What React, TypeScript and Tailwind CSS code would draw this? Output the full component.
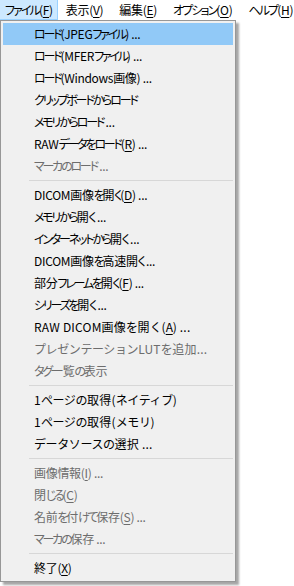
import React from "react";

const KANA = /([\u3040-\u30ff\u30fc]+)/;

type Mode = "n" | "w" | "b";

const kanaCls: Record<Mode, string> = {
  n: "tracking-[-2.2px]",
  w: "tracking-[-0.4px]",
  b: "tracking-[-1.9px]",
};
const latCls: Record<Mode, string> = {
  n: "tracking-[-0.3px]",
  w: "tracking-[0.2px]",
  b: "tracking-[-0.3px]",
};

function T({ s, mode = "n" }: { s: string; mode?: Mode }) {
  const parts = s.split(KANA).filter((p) => p.length > 0);
  return (
    <>
      {parts.map((p, i) => (
        <span key={i} className={KANA.test(p) ? kanaCls[mode] : latCls[mode]}>
          {p}
        </span>
      ))}
    </>
  );
}

const U = ({ c }: { c: string }) => (
  <span className="underline underline-offset-2 tracking-[-0.3px]">{c}</span>
);

type Item =
  | { sep: true }
  | {
      sep?: false;
      a: string;
      k?: string;
      b?: string;
      disabled?: boolean;
      active?: boolean;
      wide?: boolean;
    };

const items: Item[] = [
  { a: "ロード(JPEGファイル) ...", active: true },
  { a: "ロード(MFERファイル) ..." },
  { a: "ロード(Windows画像) ..." },
  { a: "クリップボードからロード" },
  { a: "メモリからロード ..." },
  { a: "RAWデータをロード(", k: "R", b: ") ..." },
  { a: "マーカのロード ...", disabled: true },
  { sep: true },
  { a: "DICOM画像を開く(", k: "D", b: ") ..." },
  { a: "メモリから開く ..." },
  { a: "インターネットから開く ..." },
  { a: "DICOM画像を高速開く ..." },
  { a: "部分フレームを開く(", k: "F", b: ") ..." },
  { a: "シリーズを開く ..." },
  { a: "RAW DICOM画像を開く(", k: "A", b: ") ...", wide: true },
  { a: "プレゼンテーションLUTを追加...", disabled: true, wide: true },
  { a: "タグ一覧の表示", disabled: true },
  { sep: true },
  { a: "1ページの取得(ネイティブ)", wide: true },
  { a: "1ページの取得(メモリ)", wide: true },
  { a: "データソースの選択 ...", wide: true },
  { sep: true },
  { a: "画像情報(", k: "I", b: ") ...", disabled: true },
  { a: "閉じる(", k: "C", b: ")", disabled: true },
  { a: "名前を付けて保存(", k: "S", b: ") ...", disabled: true },
  { a: "マーカの保存 ...", disabled: true },
  { sep: true },
  { a: "終了(", k: "X", b: ")" },
];

const bar: { t: string; k: string }[] = [
  { t: "ファイル", k: "F" },
  { t: "表示", k: "V" },
  { t: "編集", k: "E" },
  { t: "オプション", k: "O" },
  { t: "ヘルプ", k: "H" },
];

export default function App() {
  return (
    <div
      className="w-[294px] h-[586px] bg-white text-[12px] text-black overflow-hidden"
      style={{ fontFamily: '"Noto Sans CJK JP", sans-serif' }}
    >
      <div className="flex h-[20px] items-stretch whitespace-nowrap [font-feature-settings:'palt']">
        {bar.map((b, i) => (
          <div
            key={b.t}
            className={
              i === 0
                ? "flex items-center pl-[5px] pr-[4px] bg-[#cce8ff] border-r border-b border-[#99d1ff]"
                : "flex items-center px-[8px]"
            }
          >
            <span>
              <T s={b.t + "("} mode="b" />
              <U c={b.k} />
              <T s=")" mode="b" />
            </span>
          </div>
        ))}
      </div>
      <div className="w-[236px] bg-[#f0f0f0] border border-[#979797] pt-[2px] pb-[2px] shadow-[3px_3px_2px_rgba(0,0,0,0.35)]">
        {items.map((it, i) =>
          it.sep ? (
            <div key={i} className="h-[7px] flex items-center pl-[28px] pr-[2px]">
              <div className="h-px w-full bg-[#d7d7d7]" />
            </div>
          ) : (
            <div
              key={i}
              className={
                "h-[22px] mx-[2px] flex items-center pl-[31px] whitespace-nowrap " +
                (it.active ? "bg-[#91c9f7] " : "") +
                (it.disabled ? "text-[#6d6d6d] " : "") +
                (it.wide ? "" : "[font-feature-settings:'palt']")
              }
            >
              <span>
                <T s={it.a} mode={it.wide ? "w" : "n"} />
                {it.k ? <U c={it.k} /> : null}
                {it.b ? <T s={it.b} mode={it.wide ? "w" : "n"} /> : null}
              </span>
            </div>
          )
        )}
      </div>
    </div>
  );
}
